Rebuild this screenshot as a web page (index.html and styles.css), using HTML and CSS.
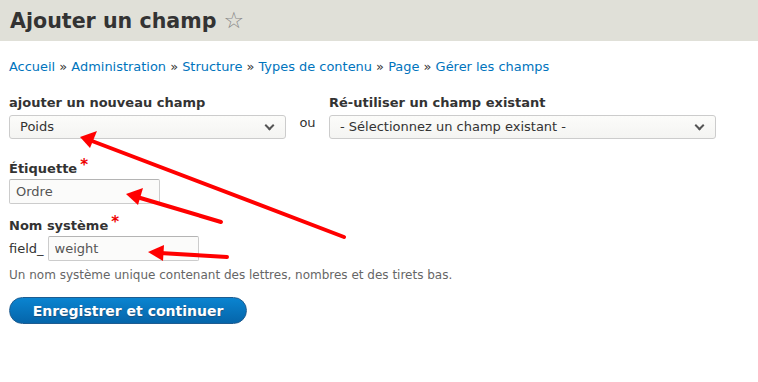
FILE: index.html
```html
<!DOCTYPE html>
<html>
<head>
    <meta charset="UTF-8">
    <title>Ajouter un champ</title>
    <link rel="stylesheet" href="styles.css">
</head>
<body>
    <div class="entete">
        <h1 class="titre">Ajouter un champ <span class="etoile">&#9734;</span></h1>
    </div>

    <div class="page">
        <div class="fil">
            <a href="#">Accueil</a> » <a href="#">Administration</a> » <a href="#">Structure</a> » <a href="#">Types de contenu</a> » <a href="#">Page</a> » <a href="#">Gérer les champs</a>
        </div>

        <form class="formulaire">
            <div class="ligne">
                <div class="colonne nouveau">
                    <label class="etiq">ajouter un nouveau champ</label>
                    <div class="choix">Poids <span class="fleche"></span></div>
                </div>
                <div class="ou">ou</div>
                <div class="colonne existant">
                    <label class="etiq">Ré-utiliser un champ existant</label>
                    <div class="choix">- Sélectionnez un champ existant - <span class="fleche"></span></div>
                </div>
            </div>

            <div class="bloc">
                <label class="etiq">Étiquette<span class="requis">*</span></label>
                <input class="texte" type="text" value="Ordre">
            </div>

            <div class="bloc serre">
                <label class="etiq">Nom système<span class="requis">*</span></label>
                <div class="machine">field_ <input class="texte" type="text" value="weight"></div>
                <div class="aide">Un nom système unique contenant des lettres, nombres et des tirets bas.</div>
            </div>

            <button type="button" class="bouton">Enregistrer et continuer</button>
        </form>
    </div>

    <svg class="fleches" width="758" height="382" viewBox="0 0 758 382">
        <g stroke="#f00" stroke-width="4" stroke-linecap="round" fill="#f00">
            <line x1="344" y1="237" x2="92" y2="141" />
            <polygon points="80,137 97,131 90,148" stroke="none" />
            <line x1="221" y1="222" x2="137" y2="197" />
            <polygon points="126,194 143,188 138,205" stroke="none" />
            <line x1="227" y1="257" x2="160" y2="253" />
            <polygon points="148,252 164,245 163,261" stroke="none" />
        </g>
    </svg>
</body>
</html>
```

FILE: styles.css
```css
body {
    margin: 0;
    font-family: "DejaVu Sans", sans-serif;
    font-size: 13px;
    color: #333;
    background: #fff;
    position: relative;
}

.entete {
    background-color: #e0e0d8;
    height: 41px;
    padding: 0 10px;
}

.titre {
    margin: 0;
    font-size: 20.6px;
    line-height: 41px;
    font-weight: bold;
    color: #333;
}

.etoile {
    font-weight: normal;
    font-size: 23px;
    color: #888;
}

.page {
    padding: 17px 9px 0;
}

.fil {
    line-height: 18px;
    font-size: 12.95px;
}

.fil a {
    color: #0074bd;
    text-decoration: none;
}

.formulaire {
    margin-top: 18px;
}

.ligne {
    display: flex;
    align-items: flex-end;
}

.colonne {
    display: flex;
    flex-direction: column;
}

.nouveau {
    width: 277px;
}

.existant {
    width: 387px;
}

.ou {
    width: 43px;
    text-align: center;
    height: 24px;
    line-height: 16px;
}

.etiq {
    font-weight: bold;
    line-height: 18px;
    height: 18px;
    margin-bottom: 3px;
    display: block;
}

.bloc .etiq {
    margin-bottom: 1px;
}

.requis {
    color: #e00;
    font-size: 15px;
    line-height: 0;
    margin-left: 3px;
    vertical-align: 3px;
}

.choix {
    height: 22px;
    line-height: 22px;
    border: 1px solid #ccc;
    border-radius: 3px;
    background: linear-gradient(#fcfcfa, #f4f4f2);
    padding: 0 10px;
    position: relative;
}

.fleche {
    position: absolute;
    right: 12px;
    top: 6px;
    width: 5px;
    height: 5px;
    border-right: 2px solid #555;
    border-bottom: 2px solid #555;
    transform: rotate(45deg);
}

.bloc {
    margin-top: 21px;
}

.serre {
    margin-top: 13px;
}

.texte {
    box-sizing: border-box;
    width: 151px;
    height: 25px;
    border: 1px solid #ccc;
    border-top-color: #b4b4b4;
    border-radius: 2px;
    background: #fbfbfa;
    font-family: "DejaVu Sans", sans-serif;
    font-size: 13px;
    color: #555;
    padding: 0 6px;
    margin: 0;
}

.machine {
    display: flex;
    align-items: center;
}

.machine .texte {
    margin-left: 4px;
}

.aide {
    font-size: 12px;
    color: #666;
    margin-top: 7px;
}

.bouton {
    margin-top: 15px;
    width: 238px;
    height: 27px;
    border: 1px solid #1e5c90;
    border-radius: 20px;
    background: linear-gradient(#0a84d0, #0565aa);
    color: #fff;
    font-family: "DejaVu Sans", sans-serif;
    font-size: 14px;
    font-weight: bold;
    text-shadow: 0 1px 1px #1e4f78;
    padding: 0;
}

.fleches {
    position: absolute;
    left: 0;
    top: 0;
    pointer-events: none;
}
```
